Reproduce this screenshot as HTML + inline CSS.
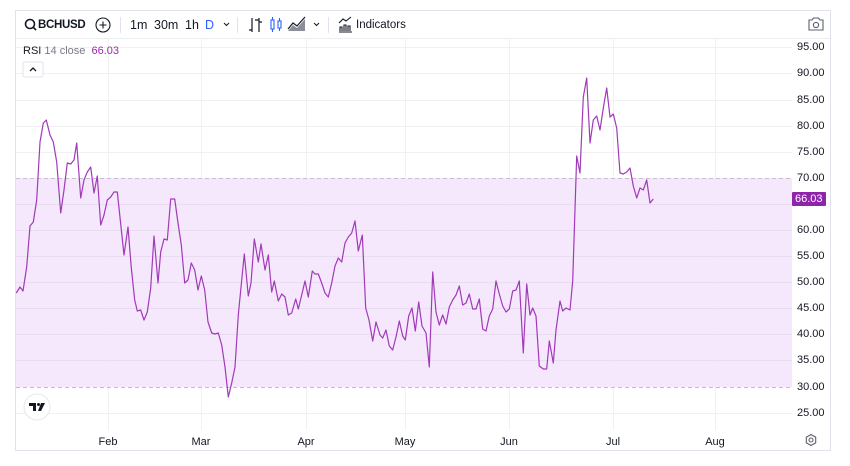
<!DOCTYPE html>
<html><head><meta charset="utf-8"><style>
*{margin:0;padding:0;box-sizing:border-box}
body{width:850px;height:466px;background:#fff;font-family:"Liberation Sans",sans-serif;position:relative;overflow:hidden}
.frame{position:absolute;left:15px;top:10px;width:816px;height:441px;border:1px solid #e0e3eb}
.t{position:absolute;font-size:12px;color:#131722;white-space:nowrap}
.sep{position:absolute;top:17px;width:1px;height:16px;background:#e0e3eb}
.ax{position:absolute;left:797px;font-size:11px;color:#131722}
.tm{position:absolute;top:436px;font-size:11px;color:#131722;transform:translateX(-50%)}
</style></head><body>
<div class="frame"></div>
<div style="position:absolute;left:16px;top:38px;width:814px;height:1px;background:#eceef2"></div>
<svg style="position:absolute;left:0;top:0" width="850" height="466">
<g stroke="#f2f0f3" stroke-width="1">
<line x1="16" x2="792" y1="47.5" y2="47.5"/><line x1="16" x2="792" y1="73.5" y2="73.5"/><line x1="16" x2="792" y1="100.5" y2="100.5"/><line x1="16" x2="792" y1="126.5" y2="126.5"/><line x1="16" x2="792" y1="152.5" y2="152.5"/><line x1="16" x2="792" y1="413.5" y2="413.5"/>
<line x1="108.5" x2="108.5" y1="39" y2="430"/><line x1="201.5" x2="201.5" y1="39" y2="430"/><line x1="306.5" x2="306.5" y1="39" y2="430"/><line x1="405.5" x2="405.5" y1="39" y2="430"/><line x1="509.5" x2="509.5" y1="39" y2="430"/><line x1="613.5" x2="613.5" y1="39" y2="430"/><line x1="715.5" x2="715.5" y1="39" y2="430"/>
</g>
<rect x="16" y="178" width="776" height="209" fill="#f4e5fc" fill-opacity="0.9"/>
<g stroke="#eadcf0" stroke-width="1">
<line x1="16" x2="792" y1="204.5" y2="204.5"/><line x1="16" x2="792" y1="230.5" y2="230.5"/><line x1="16" x2="792" y1="256.5" y2="256.5"/><line x1="16" x2="792" y1="282.5" y2="282.5"/><line x1="16" x2="792" y1="308.5" y2="308.5"/><line x1="16" x2="792" y1="334.5" y2="334.5"/><line x1="16" x2="792" y1="360.5" y2="360.5"/>
</g>
<line x1="16" x2="792" y1="178.5" y2="178.5" stroke="#c9bccf" stroke-dasharray="4 3"/>
<line x1="16" x2="792" y1="387.5" y2="387.5" stroke="#c9bccf" stroke-dasharray="4 3"/>
<polyline fill="none" stroke="#a13ab8" stroke-width="1.2" stroke-linejoin="round" points="16.3,293 20,287 23,291 26.7,267 30,226 33.3,222 36.7,200 40,142 43.3,123 46.3,120 50,135 53.3,142 56.7,162 60.7,213 64,190 67.3,163 70.7,164 74,160 76.7,143 80.7,198 84,180 87.3,172 90.7,167 94,193 97.3,176 100.7,225 104,215 107.3,200 110.7,197 114,192 117.3,192 124,255 128,227 131.3,268 134.7,300 137.3,311 140.7,310 144,320 147.3,312 150.7,288 154,236 158,283 160.7,252 164,239 167.3,240 170.7,199 174.7,199 178,223 181.3,245 184.7,283 188,280 191.3,263 194.7,270 198,290 201.3,276 204.7,290 208,322 211.7,333 215,334 218.3,333 221.7,345 225,367 228.3,397 231.7,383 235,367 238.3,315 241.7,280 244.3,254 248.3,296 251,283 254.3,239 258.3,262 261,244 265,270 268.3,255 271.7,292 274.3,281 278.3,301 281.7,294 285,297 288.3,315 291.7,313 295.7,299 298.3,309 301.7,295 305,281 308.3,297 312.3,271 315,274 318.3,274 321.7,283 325,293 328.3,297 331.7,283 335,266 338.3,258 341.7,262 345,243 348.3,237 351.7,233 355,221 358.3,251 362.3,235 365.7,308 369,320 372.7,341 376,322 380,335 382.7,338 386,330 389.3,346 392.7,350 396,337 399.3,321 402.7,336 405.3,340 408.7,316 412,308 415.3,331 418.7,302 422,326 426,333 429.3,367 432.7,272 436,312 439.3,325 442.7,315 446,324 449.3,307 452.7,300 456,295 459.3,286 462.7,305 466,303 469.3,294 472.7,309 476,309 479.3,299 482.7,329 486,331 489.3,316 492.7,309 496,281 499.3,294 502.7,306 506,312 509.3,309 512.7,291 516,290 519.3,281 523.3,353 526.7,284 530,315 532.7,308 536,316 539.3,366 543.3,369 546.7,369 549.3,341 553.3,363 556,330 560,301 562.7,311 566,308 570,310 572.7,281 576.7,156 580,173 583.3,97 586.7,78 590,143 593.3,120 596.7,116 600,130 603.3,108 606.7,88 610,117 613.3,114 616.7,128 620,173 623.3,174 626.7,172 630,168 633.3,186 636.7,198 640,188 643.3,190 646.7,180 650,203 653.3,199"/>
<circle cx="30" cy="24" r="4.5" fill="none" stroke="#131722" stroke-width="1.6"/><line x1="33.3" y1="27.3" x2="36" y2="30" stroke="#131722" stroke-width="1.6"/>
<circle cx="103" cy="25" r="7" fill="none" stroke="#131722" stroke-width="1.1"/><path d="M99.5 25h7M103 21.5v7" stroke="#131722" stroke-width="1.1"/>
<path d="M224 23l2.5 2.5 2.5-2.5M314 23l2.5 2.5 2.5-2.5" fill="none" stroke="#131722" stroke-width="1"/>
<path d="M252 18v14M259 18v14" fill="none" stroke="#131722" stroke-width="1.2"/>
<path d="M249 30h3M259 22h3M255 20h4" stroke="#131722" stroke-width="1.2"/>
<rect x="271" y="20" width="3" height="9" fill="none" stroke="#2962ff" stroke-width="1.1"/><path d="M272.5 17v3M272.5 29v3M279.5 18v3M279.5 28v3" stroke="#2962ff" stroke-width="1.1"/><rect x="278" y="21" width="3" height="7" fill="none" stroke="#2962ff" stroke-width="1.1"/>
<path d="M288 31l5-6 4 3 8-9v12z" fill="#8a8e99"/><path d="M288 29l5-6 4 3 8-9" fill="none" stroke="#131722" stroke-width="1.2"/>
<path d="M339 32h13M340 31v-4h2v4M344 31v-6h2v6M348 31v-5h2v5M339 23l4-4 3 2 5-4" fill="none" stroke="#131722" stroke-width="1.1"/>
<path d="M809 20h3l1.5-2h5l1.5 2h3v10h-14z" fill="none" stroke="#5d606b" stroke-width="1.1"/><circle cx="816" cy="25" r="2.6" fill="none" stroke="#5d606b" stroke-width="1.1"/>
<rect x="23" y="62" width="20" height="15" rx="2" fill="#fff" stroke="#e0e3eb"/><path d="M30 71l3-3 3 3" fill="none" stroke="#131722" stroke-width="1.3"/>
<circle cx="37" cy="407" r="13" fill="#fff" stroke="#e6e6ee"/>
<path d="M29 403h7v8h-3v-5h-4z" fill="#131722"/><circle cx="38.5" cy="404.5" r="1.5" fill="#131722"/><path d="M41 403h4l-4 8h-3z" fill="#131722"/>
<circle cx="811" cy="440" r="2" fill="none" stroke="#5d606b" stroke-width="1.1"/><path d="M811 434.5l4.7 2.75v5.5l-4.7 2.75-4.7-2.75v-5.5z" fill="none" stroke="#5d606b" stroke-width="1.1"/>
<rect x="792" y="192" width="34" height="14" rx="1" fill="#8e24aa"/>
</svg>
<div class="t" style="left:38px;top:19px;font-weight:bold;font-size:11.5px;letter-spacing:-0.3px">BCHUSD</div>
<div class="sep" style="left:120px"></div>
<div class="t" style="left:130px;top:18px;font-size:12.5px">1m</div>
<div class="t" style="left:154px;top:18px;font-size:12.5px">30m</div>
<div class="t" style="left:185px;top:18px;font-size:12.5px">1h</div>
<div class="t" style="left:205px;top:18px;font-size:12.5px;color:#2962ff">D</div>
<div class="sep" style="left:237px"></div>
<div class="sep" style="left:328px"></div>
<div class="t" style="left:356px;top:19px;font-size:11.5px">Indicators</div>
<div class="t" style="left:23px;top:45px;font-size:11px">RSI <span style="color:#787b86">14 close</span> <span style="color:#9c27b0;margin-left:3px">66.03</span></div>
<div class="ax" style="top:41px">95.00</div><div class="ax" style="top:67px">90.00</div><div class="ax" style="top:94px">85.00</div><div class="ax" style="top:120px">80.00</div><div class="ax" style="top:146px">75.00</div><div class="ax" style="top:172px">70.00</div><div class="ax" style="top:224px">60.00</div><div class="ax" style="top:250px">55.00</div><div class="ax" style="top:276px">50.00</div><div class="ax" style="top:302px">45.00</div><div class="ax" style="top:328px">40.00</div><div class="ax" style="top:354px">35.00</div><div class="ax" style="top:381px">30.00</div><div class="ax" style="top:407px">25.00</div>
<div class="ax" style="top:193px;left:795px;color:#fff">66.03</div>
<div class="tm" style="left:108px">Feb</div><div class="tm" style="left:201px">Mar</div><div class="tm" style="left:306px">Apr</div><div class="tm" style="left:405px">May</div><div class="tm" style="left:509px">Jun</div><div class="tm" style="left:613px">Jul</div><div class="tm" style="left:715px">Aug</div>
</body></html>
